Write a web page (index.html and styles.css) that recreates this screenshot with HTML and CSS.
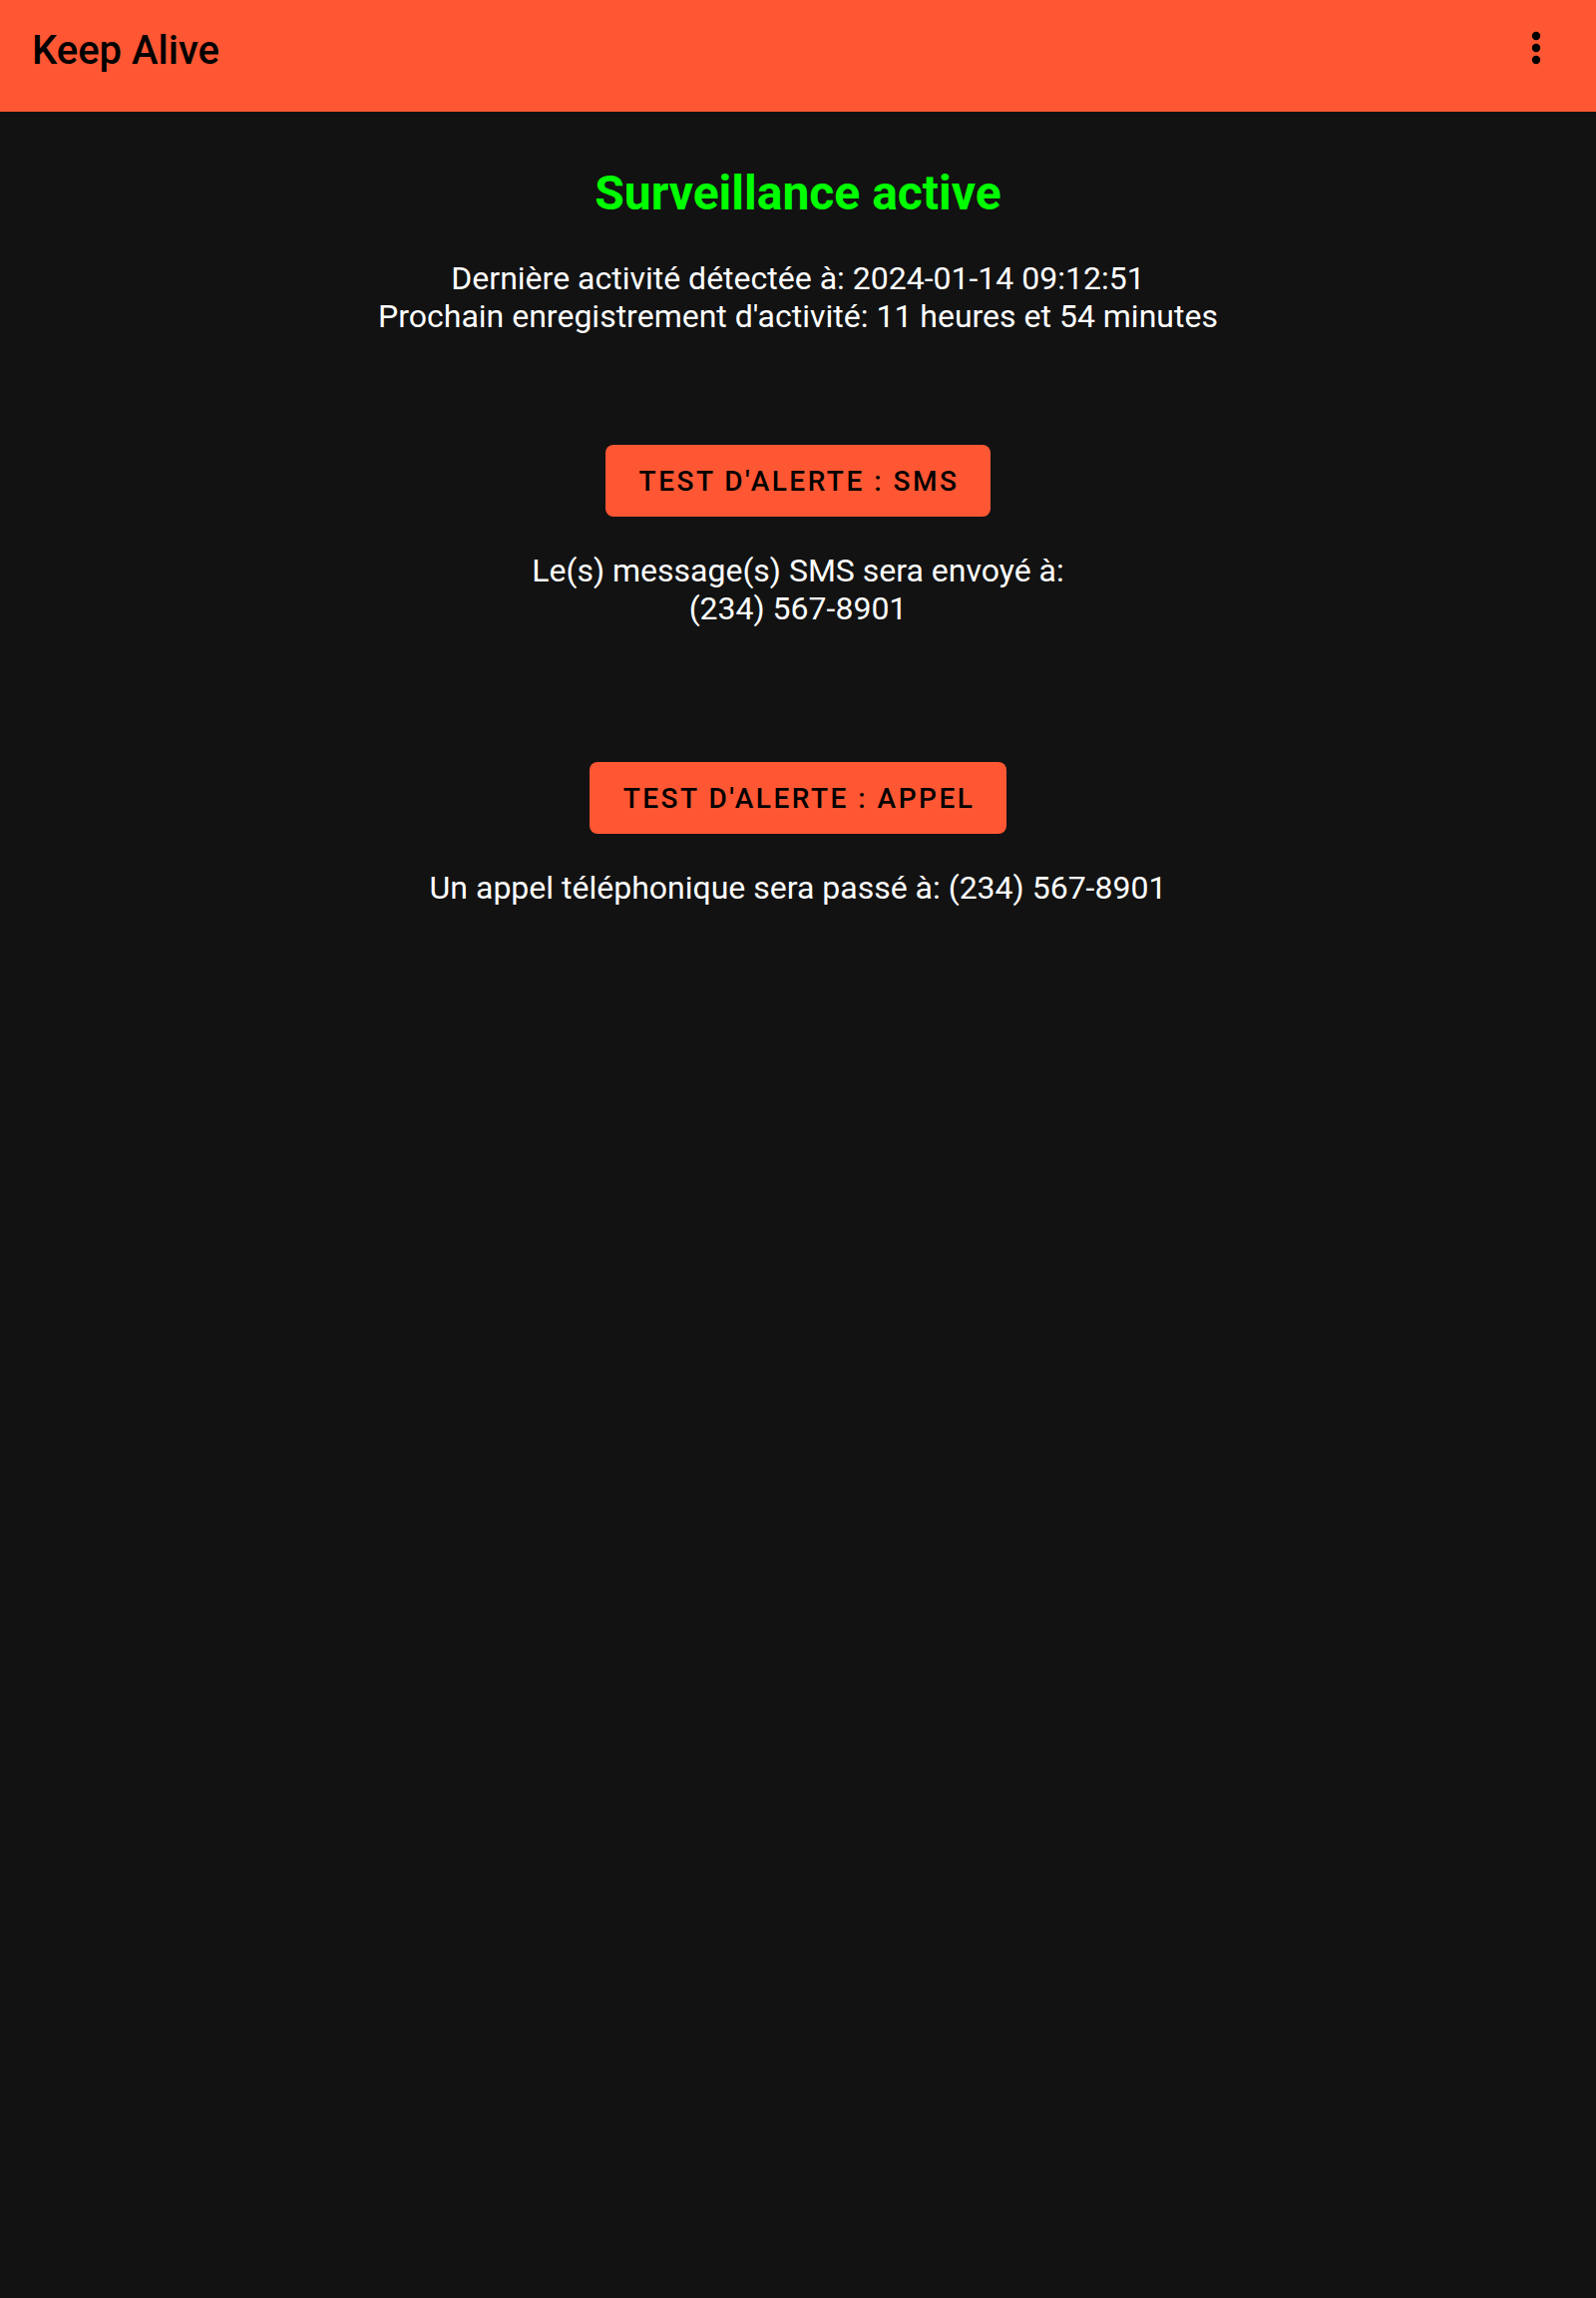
FILE: index.html
```html
<!DOCTYPE html>
<html lang="fr">
<head>
<meta charset="utf-8">
<title>Keep Alive</title>
<link rel="stylesheet" href="styles.css">
</head>
<body>
<header class="appbar">
  <h1 class="appbar-title">Keep Alive</h1>
  <div class="menu" aria-label="Menu">
    <svg width="16" height="40" viewBox="0 0 16 40">
      <circle cx="8" cy="8" r="4.2" fill="#000"/>
      <circle cx="8" cy="20" r="4.2" fill="#000"/>
      <circle cx="8" cy="32" r="4.2" fill="#000"/>
    </svg>
  </div>
</header>
<main class="content">
  <h2 class="status">Surveillance active</h2>
  <p class="text info">Dernière activité détectée à: 2024-01-14 09:12:51<br>Prochain enregistrement d'activité: 11 heures et 54 minutes</p>
  <button class="btn btn-sms">Test d'alerte : SMS</button>
  <p class="text sms-text">Le(s) message(s) SMS sera envoyé à:<br>(234) 567-8901</p>
  <button class="btn btn-call">Test d'alerte : Appel</button>
  <p class="text call-text">Un appel téléphonique sera passé à: (234) 567-8901</p>
</main>
</body>
</html>
```

FILE: styles.css
```css
html, body {
  margin: 0;
  padding: 0;
  background: #121212;
  height: 100%;
}
body {
  font-family: Roboto, "Noto Sans", sans-serif;
  color: #ffffff;
}
.appbar {
  height: 112px;
  background: #ff5733;
  display: flex;
  align-items: center;
  justify-content: space-between;
  padding: 0 52px 0 32px;
  box-sizing: border-box;
}
.appbar-title {
  margin: 0;
  font-size: 40px;
  font-weight: 500;
  color: #000;
  position: relative;
  top: -6px;
}
.menu {
  display: flex;
  align-items: center;
  position: relative;
  top: -8px;
}
.menu svg {
  display: block;
}
.content {
  display: flex;
  flex-direction: column;
  align-items: center;
  text-align: center;
}
.status {
  margin: 54px 0 0;
  font-size: 48px;
  line-height: 56px;
  font-weight: 700;
  color: #00ff00;
}
.text {
  margin: 0;
  font-size: 32px;
  line-height: 38px;
  color: #ffffff;
}
.info {
  margin-top: 38px;
}
.btn {
  font-family: Roboto, "Noto Sans", sans-serif;
  background: #ff5733;
  color: #000;
  border: none;
  border-radius: 8px;
  height: 72px;
  padding: 0 32px 0 34px;
  font-size: 28px;
  font-weight: 500;
  letter-spacing: 2.5px;
  text-transform: uppercase;
  cursor: pointer;
}
.btn-sms {
  margin-top: 110px;
}
.sms-text {
  margin-top: 35px;
}
.btn-call {
  margin-top: 135px;
}
.call-text {
  margin-top: 35px;
}
```
